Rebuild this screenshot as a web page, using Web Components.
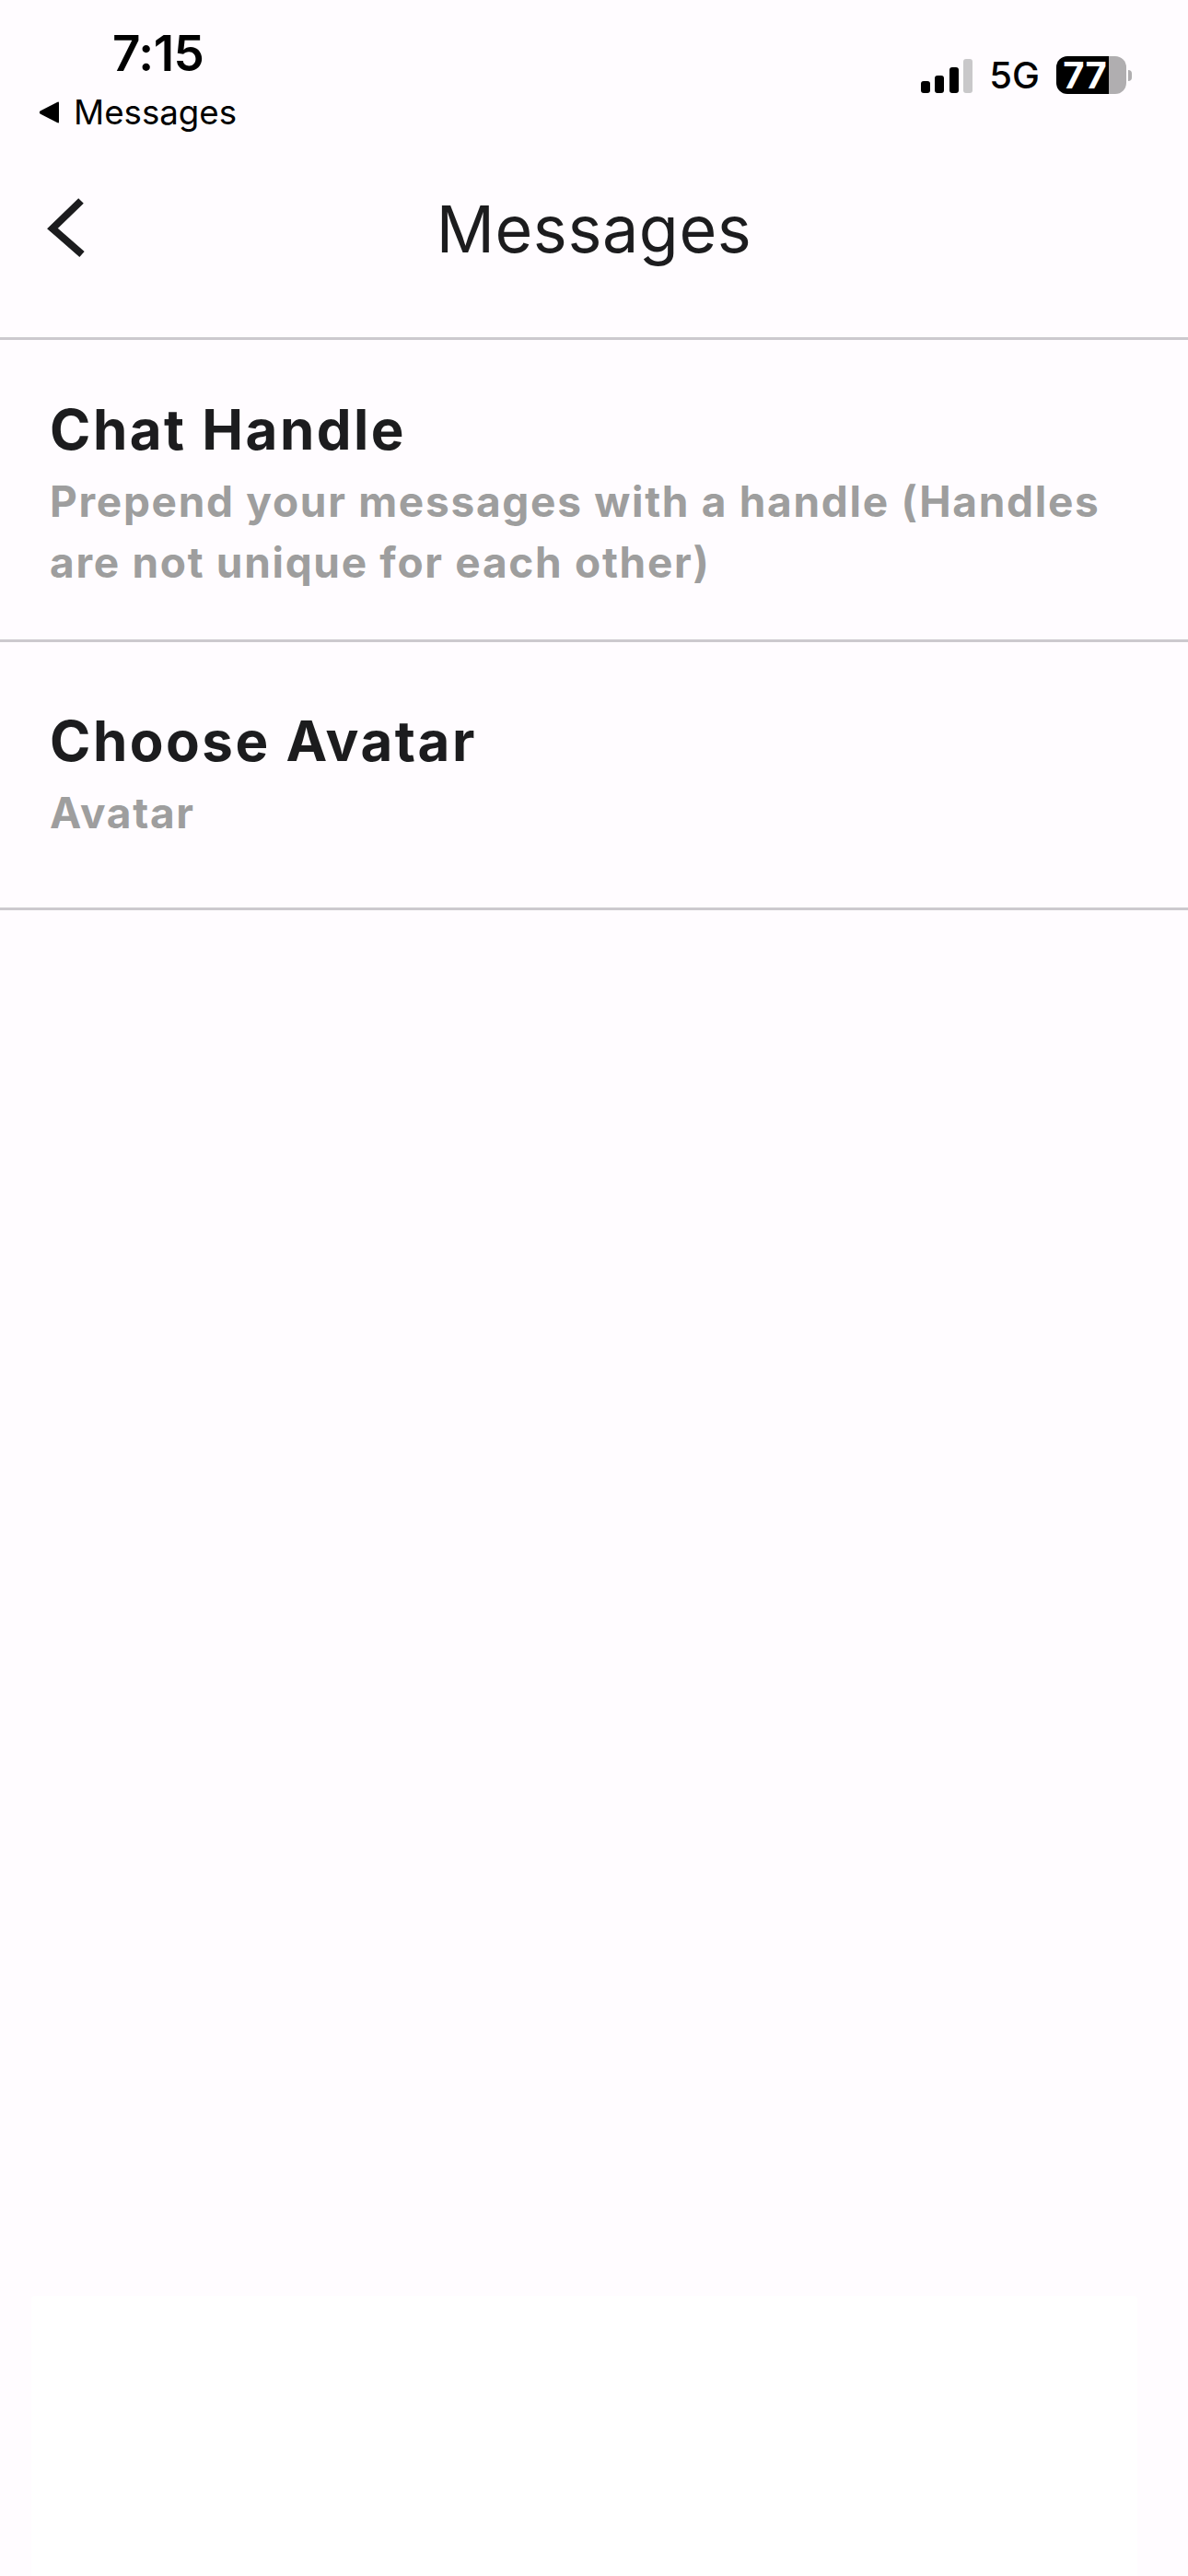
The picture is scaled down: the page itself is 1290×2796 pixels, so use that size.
<!DOCTYPE html>
<html lang="en">
<head>
<meta charset="utf-8">
<title>Messages</title>
<style>
html, body { margin: 0; padding: 0; background: #FFFCFF; }
body { width: 1290px; height: 2796px; overflow: hidden; font-family: Inter, "Liberation Sans", sans-serif; }
app-page { height: 2796px; }
</style>
</head>
<body>
<app-page>
  <status-bar time="7:15" back="Messages" network="5G" battery="77"></status-bar>
  <nav-header title="Messages"></nav-header>
  <settings-row title="Chat Handle" subtitle="Prepend your messages with a handle (Handles are not unique for each other)" style="--row-h:328px;--row-top:62px"></settings-row>
  <settings-row title="Choose Avatar" subtitle="Avatar" style="--row-h:291px;--row-top:72px"></settings-row>
  <bottom-panel></bottom-panel>
</app-page>

<script>
class AppPage extends HTMLElement {
  constructor() {
    super()
    this.attachShadow({ mode: 'open' }).innerHTML = `
      <style>
        :host { display: flex; flex-direction: column; width: 1290px; background: #FFFCFF; color: #1C1C1E; }
      </style>
      <slot></slot>`
  }
}

class StatusBar extends HTMLElement {
  constructor() {
    super()
    const shadow = this.attachShadow({ mode: 'open' })
    shadow.innerHTML = `
      <style>
        :host { display: flex; justify-content: space-between; height: 150px; padding: 33px 61px 0 42px; box-sizing: border-box; color: #000; }
        .left { display: flex; flex-direction: column; }
        .time { font-size: 53px; font-weight: 600; line-height: 50px; margin-left: 80px; letter-spacing: -0.5px; }
        .back { display: flex; align-items: center; gap: 14px; margin-top: 18px; font-size: 36.7px; line-height: 42px; font-weight: 400; }
        .right { display: flex; align-items: center; height: 41px; margin-top: 28px; }
        .signal { display: block; }
        .net { font-size: 40px; font-weight: 500; line-height: 41px; margin-left: 18px; }
        .battery { display: flex; align-items: center; justify-content: center; box-sizing: border-box; width: 76px; height: 41px; margin-left: 18px; padding-right: 14px;
          border-radius: 12px; color: #fff; font-size: 40px; font-weight: 700;
          background: linear-gradient(90deg, #000 0 57px, #B0AEB0 57px); }
        .nub { width: 4px; height: 12px; margin-left: 2px; background: #B0AEB0; border-radius: 0 6px 6px 0; }
      </style>
      <div class="left">
        <div class="time"></div>
        <div class="back">
          <svg width="24" height="24" viewBox="0 0 24 24"><path d="M22 1.5 V22.5 Q22 24 20 23 L1.5 13.4 Q0 12 1.5 10.6 L20 1 Q22 0 22 1.5 Z" fill="#000"/></svg>
          <span class="back-label"></span>
        </div>
      </div>
      <div class="right">
        <svg class="signal" width="56" height="37" viewBox="0 0 56 37" style="margin-top:1px">
          <rect x="0" y="24" width="10" height="13" rx="3" fill="#000"/>
          <rect x="15" y="18" width="10" height="19" rx="3" fill="#000"/>
          <rect x="31" y="9" width="10" height="28" rx="3" fill="#000"/>
          <rect x="46" y="0" width="10" height="37" rx="3" fill="#C9C8CA"/>
        </svg>
        <span class="net"></span>
        <div class="battery"></div>
        <div class="nub"></div>
      </div>`
    this.shadow = shadow
  }

  connectedCallback() {
    this.shadow.querySelector('.time').textContent = this.getAttribute('time')
    this.shadow.querySelector('.back-label').textContent = this.getAttribute('back')
    this.shadow.querySelector('.net').textContent = this.getAttribute('network')
    this.shadow.querySelector('.battery').textContent = this.getAttribute('battery')
  }
}

class NavHeader extends HTMLElement {
  constructor() {
    super()
    const shadow = this.attachShadow({ mode: 'open' })
    shadow.innerHTML = `
      <style>
        :host { display: grid; grid-template-columns: 1fr auto 1fr; align-items: center; height: 219px; padding-bottom: 16px; box-sizing: border-box; border-bottom: 3px solid #CCC9CE; color: #1C1C1E; }
        .back { display: flex; padding-left: 50px; margin-top: -5px; }
        h1 { margin: 0; font-size: 70px; font-weight: 400; line-height: 80px; margin-top: -2px; letter-spacing: 0.6px; }
      </style>
      <div class="back">
        <svg width="46" height="68" viewBox="0 0 46 68"><path d="M38 4 L7 34 L39 62" fill="none" stroke="#1C1C1E" stroke-width="8"/></svg>
      </div>
      <h1></h1>
      <div></div>`
    this.shadow = shadow
  }

  connectedCallback() {
    this.shadow.querySelector('h1').textContent = this.getAttribute('title')
  }
}

class SettingsRow extends HTMLElement {
  constructor() {
    super()
    const shadow = this.attachShadow({ mode: 'open' })
    shadow.innerHTML = `
      <style>
        :host { display: block; height: var(--row-h); padding: var(--row-top) 60px 0 54px; box-sizing: border-box; border-bottom: 3px solid #CCC9CE; }
        .title { font-size: 60px; line-height: 70px; font-weight: 650; letter-spacing: 2.5px; color: #1C1C1E; }
        .sub { font-size: 46px; line-height: 66px; font-weight: 650; letter-spacing: 1.7px; color: #9E9E9E; margin-top: 10px; }
      </style>
      <div class="title"></div>
      <div class="sub"></div>`
    this.shadow = shadow
  }

  connectedCallback() {
    this.shadow.querySelector('.title').textContent = this.getAttribute('title')
    this.shadow.querySelector('.sub').textContent = this.getAttribute('subtitle')
  }
}

class BottomPanel extends HTMLElement {
  constructor() {
    super()
    this.attachShadow({ mode: 'open' }).innerHTML = `
      <style>
        :host { display: block; height: 304px; margin: auto 55px 0 34px; background: #FFFFFF; border-radius: 4px 4px 0 0; }
      </style>`
  }
}

customElements.define('app-page', AppPage)
customElements.define('status-bar', StatusBar)
customElements.define('nav-header', NavHeader)
customElements.define('settings-row', SettingsRow)
customElements.define('bottom-panel', BottomPanel)
</script>
</body>
</html>
